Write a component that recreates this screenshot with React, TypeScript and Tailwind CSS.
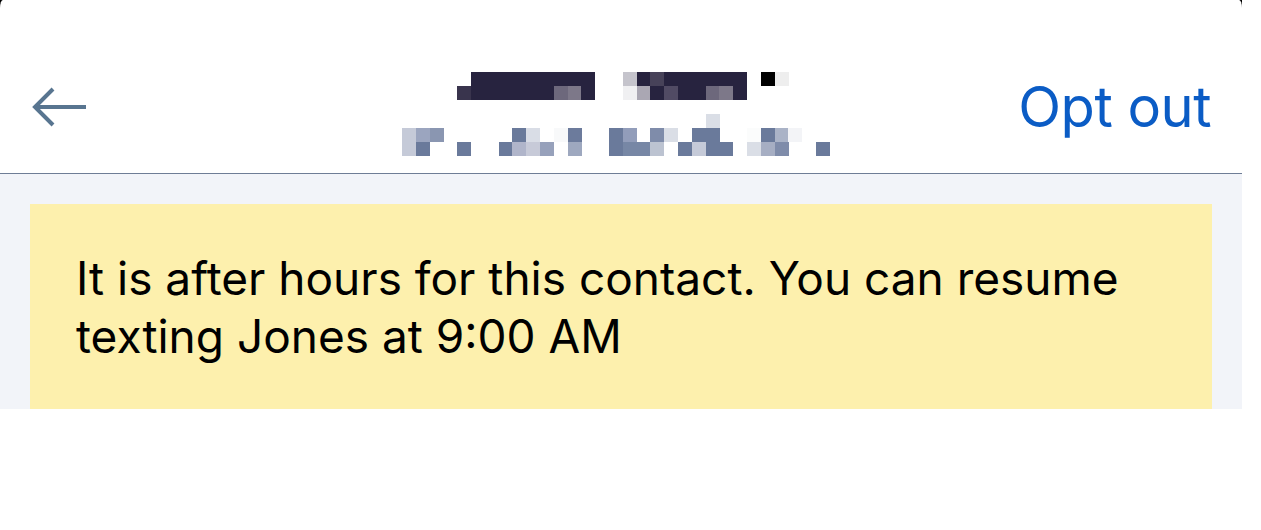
const TITLE_DARK = "#27233f";
const SUB = "#6a7a9b";

// mosaic cells: [col, row, colour]
const cells: [number, number, string][] = [
  ...[5, 6, 7, 8, 9, 10, 11, 12, 13].map((c) => [c, 0, TITLE_DARK] as [number, number, string]),
  [16, 0, "#c5c4cc"],
  [17, 0, TITLE_DARK],
  [18, 0, "#474259"],
  ...[19, 20, 21, 22, 23, 24].map((c) => [c, 0, TITLE_DARK] as [number, number, string]),
  [26, 0, "#000000"],
  [27, 0, "#eeeeee"],
  [4, 1, "#39344d"],
  ...[5, 6, 7, 8, 9, 10].map((c) => [c, 1, TITLE_DARK] as [number, number, string]),
  [11, 1, "#6d687c"],
  [12, 1, "#7d7889"],
  [13, 1, TITLE_DARK],
  [16, 1, "#f0f0f2"],
  [17, 1, "#aaa7b3"],
  [18, 1, TITLE_DARK],
  [19, 1, "#514b64"],
  [20, 1, TITLE_DARK],
  [21, 1, TITLE_DARK],
  [22, 1, "#6d687c"],
  [23, 1, "#7d7889"],
  [24, 1, TITLE_DARK],
  [22, 3, "#dadee6"],
  [0, 4, "#c5cad8"],
  [1, 4, "#9ba5bf"],
  [2, 4, "#8a96b1"],
  [8, 4, SUB],
  [9, 4, "#d9dde6"],
  [11, 4, "#f8f9fa"],
  [12, 4, "#6c7b9c"],
  [15, 4, SUB],
  [16, 4, "#929dba"],
  [18, 4, "#7f8caa"],
  [19, 4, "#dadee6"],
  [21, 4, SUB],
  [22, 4, SUB],
  [25, 4, "#fbfcfc"],
  [26, 4, SUB],
  [27, 4, "#aab3c7"],
  [28, 4, "#f3f4f7"],
  [0, 5, "#c5cad8"],
  [1, 5, SUB],
  [4, 5, SUB],
  [7, 5, SUB],
  [8, 5, "#b0b5ca"],
  [9, 5, "#c7cad8"],
  [10, 5, "#97a1bb"],
  [12, 5, "#9ea8bf"],
  [15, 5, SUB],
  [16, 5, "#7787a5"],
  [17, 5, "#7787a5"],
  [18, 5, "#bcc3d1"],
  [20, 5, SUB],
  [21, 5, "#c5cad8"],
  [22, 5, SUB],
  [23, 5, SUB],
  [25, 5, "#dadee6"],
  [26, 5, "#a6aec3"],
  [27, 5, "#7f8caa"],
  [30, 5, SUB],
];

function BlurredName() {
  return (
    <svg width="428" height="84" viewBox="0 0 428 84" shapeRendering="crispEdges" className="block">
      {cells.map(([c, r, fill], i) => (
        <rect key={i} x={c * 13.8} y={r * 14} width={13.9} height={14} fill={fill} />
      ))}
    </svg>
  );
}

function BackArrow() {
  return (
    <svg width="58" height="44" viewBox="0 0 58 44" fill="none" stroke="#587590" strokeWidth="4">
      <path d="M56 22H5" />
      <path d="M23 4L5 22L23 40" />
    </svg>
  );
}

export default function App() {
  return (
    <div className="w-[1261px] h-[530px] bg-white" style={{ fontFamily: "Inter, 'Noto Sans', sans-serif" }}>
      <div className="w-[1242px] bg-black">
        <header className="bg-white rounded-tl-[3px_8px] rounded-tr-[3px_8px] h-[174px] border-b border-[#6e7d96] pt-[40px]">
          <div className="h-[133px] flex items-center pl-[30px] pr-[31px]">
            <BackArrow />
            <div className="ml-[314px] self-start mt-[32px]">
              <BlurredName />
            </div>
            <button className="ml-auto text-[56px] leading-none text-[#0b5cc5] tracking-[-0.5px]">Opt out</button>
          </div>
        </header>
        <section className="bg-[#f2f4f9] h-[235px] px-[30px] pt-[30px]">
          <div className="bg-[#fdf0ad] h-full pt-[45px] pl-[46px] pr-[40px]">
            <p className="text-[46px] leading-[58px] text-black">
              It is after hours for this contact. You can resume texting Jones at 9:00 AM
            </p>
          </div>
        </section>
      </div>
    </div>
  );
}
